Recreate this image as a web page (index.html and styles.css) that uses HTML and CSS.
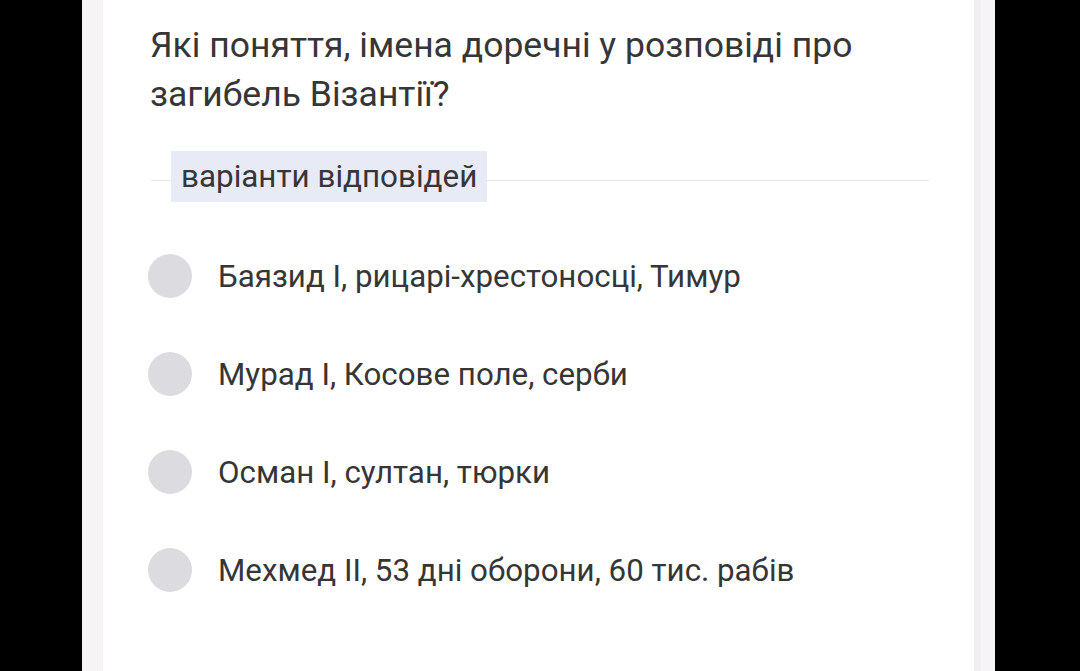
FILE: index.html
```html
<!DOCTYPE html>
<html lang="uk">
<head>
<meta charset="utf-8">
<link rel="stylesheet" href="styles.css">
</head>
<body>
<div class="screen">
  <div class="side side-left"></div>
  <div class="card">
    <h1 class="question">Які поняття, імена доречні у розповіді про загибель Візантії?</h1>
    <div class="divider">
      <span class="chip">варіанти відповідей</span>
    </div>
    <ul class="options">
      <li class="option"><span class="radio"></span><span class="label">Баязид I, рицарі-хрестоносці, Тимур</span></li>
      <li class="option"><span class="radio"></span><span class="label">Мурад I, Косове поле, серби</span></li>
      <li class="option"><span class="radio"></span><span class="label">Осман I, султан, тюрки</span></li>
      <li class="option"><span class="radio"></span><span class="label">Мехмед II, 53 дні оборони, 60 тис. рабів</span></li>
    </ul>
  </div>
  <div class="side side-right"></div>
</div>
</body>
</html>
```
FILE: styles.css
```css
html, body {
  margin: 0;
  padding: 0;
  background: #000;
  height: 100%;
  overflow: hidden;
}
.screen {
  display: flex;
  height: 671px;
  width: 1080px;
  font-family: Roboto, "Noto Sans", sans-serif;
  color: #363636;
}
.side-left {
  width: 21px;
  margin-left: 82px;
  background: #f7f4f6;
}
.side-right {
  width: 14px;
  margin-right: 85px;
  background: #f7f4f6;
  border-left: 7px solid #efeef1;
}
.card {
  flex: 1;
  background: #fff;
  padding: 21px 45px 0 47px;
}
.question {
  margin: 0;
  font-weight: 400;
  font-size: 35.5px;
  line-height: 49px;
  width: 760px;
}
.divider {
  margin-top: 32px;
  display: flex;
  align-items: center;
  height: 51px;
  padding-left: 21px;
  background: linear-gradient(#e9e9ec, #e9e9ec) no-repeat 1px 29px / 782px 1px;
}
.chip {
  background: #e8eaf6;
  height: 51px;
  line-height: 51px;
  padding: 0 10px;
  font-size: 31.4px;
}
.options {
  list-style: none;
  margin: 52px 0 0;
  padding: 0;
  display: flex;
  flex-direction: column;
  gap: 54px;
}
.option {
  display: flex;
  align-items: center;
  height: 44px;
}
.radio {
  width: 44px;
  height: 44px;
  border-radius: 50%;
  background: #dcdbdf;
  margin-left: -2px;
  margin-right: 26px;
  flex: none;
}
.label {
  font-size: 31.3px;
}
```
